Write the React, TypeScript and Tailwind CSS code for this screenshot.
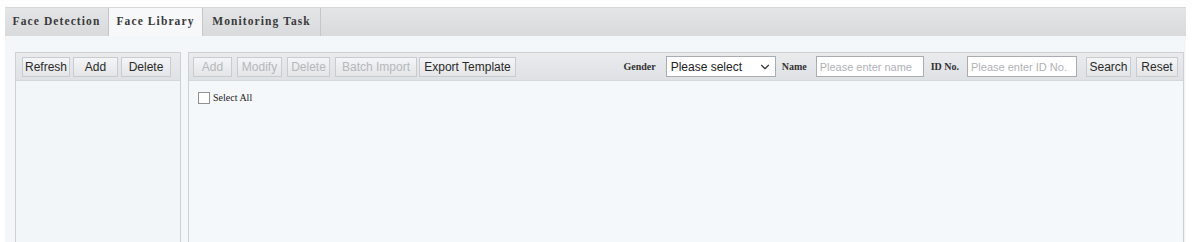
import React from 'react';
import { ChevronDown } from 'lucide-react';

const TABS = [
  { id: 'detection', label: 'Face Detection', w: 'w-[104px]' },
  { id: 'library', label: 'Face Library', w: 'w-[94px]' },
  { id: 'task', label: 'Monitoring Task', w: 'w-[118px]' },
];

const serif = { fontFamily: '"Liberation Serif", "Times New Roman", serif' };
const sans = { fontFamily: '"Liberation Sans", Arial, sans-serif' };

function ToolButton({ label, disabled, w }: { label: string; disabled?: boolean; w: string }) {
  return (
    <button
      style={sans}
      className={`${w} h-[20px] border border-[#c9cccf] bg-gradient-to-b from-[#f4f5f6] to-[#e3e5e7] text-[12px] leading-none flex items-center justify-center ${
        disabled ? 'text-[#b5b8bb]' : 'text-[#2a2a2a]'
      }`}
    >
      {label}
    </button>
  );
}

function Label({ text, className }: { text: string; className: string }) {
  return (
    <span style={serif} className={`${className} text-[10px] leading-none font-bold text-[#333] whitespace-nowrap`}>
      {text}
    </span>
  );
}

export default function App() {
  const activeTab = 'library';

  return (
    <div className="w-[1193px] h-[242px] bg-white overflow-hidden pt-[7px] pl-[5px]">
      {/* Tabs */}
      <div className="w-[1181px] h-[29px] flex border-t border-[#d6d8da] bg-gradient-to-b from-[#e4e5e6] to-[#d8dadb]">
        {TABS.map((tab) => (
          <div
            key={tab.id}
            style={serif}
            className={`${tab.w} h-full flex items-center justify-center text-[11.5px] font-bold tracking-[1.1px] text-[#3a3a3a] border-r border-[#c4c6c8] ${
              activeTab === tab.id ? 'bg-[#f6f8fa]' : ''
            }`}
          >
            {tab.label}
          </div>
        ))}
      </div>

      {/* Content */}
      <div className="w-[1181px] h-[210px] bg-[#f4f7fa] flex gap-[7px] pt-[16px] pl-[10px]">
        {/* Left panel */}
        <div className="w-[166px] h-[200px] flex flex-col border border-[#cdd1d5] bg-[#f3f6f9]">
          <div className="h-[28px] flex items-center gap-[3px] pl-[6px] bg-gradient-to-b from-[#e9ebed] to-[#dfe2e5] border-b border-[#d5d8db]">
            <ToolButton label="Refresh" w="w-[48px]" />
            <ToolButton label="Add" w="w-[45px]" />
            <ToolButton label="Delete" w="w-[50px]" />
          </div>
        </div>

        {/* Right panel */}
        <div className="w-[996px] h-[200px] flex flex-col border border-[#cdd1d5] bg-[#f5f8fb]">
          <div className="h-[28px] flex items-center pl-[4px] pr-[5px] bg-gradient-to-b from-[#e9ebed] to-[#dfe2e5] border-b border-[#d5d8db]">
            <div className="flex items-center gap-[5px]">
              <ToolButton label="Add" disabled w="w-[39px]" />
              <ToolButton label="Modify" disabled w="w-[45px]" />
              <ToolButton label="Delete" disabled w="w-[43px]" />
              <ToolButton label="Batch Import" disabled w="w-[82px]" />
            </div>
            <div className="ml-[2px]">
              <ToolButton label="Export Template" w="w-[97px]" />
            </div>

            <div className="ml-auto flex items-center">
              <Label text="Gender" className="" />
              <div
                style={sans}
                className="ml-[10px] w-[110px] h-[21px] bg-white border border-[#a9adb1] flex items-center justify-between pl-[4px] pr-[3px] text-[12px] text-[#222]"
              >
                <span>Please select</span>
                <ChevronDown size={14} strokeWidth={2} className="text-[#333]" />
              </div>
              <Label text="Name" className="ml-[6px]" />
              <input
                style={sans}
                placeholder="Please enter name"
                className="ml-[9px] w-[108px] h-[21px] bg-white border border-[#a9adb1] px-[3px] text-[11px] placeholder:text-[#b0b3b6] outline-none"
              />
              <Label text="ID No." className="ml-[7px]" />
              <input
                style={sans}
                placeholder="Please enter ID No."
                className="ml-[8px] w-[110px] h-[21px] bg-white border border-[#a9adb1] px-[3px] text-[11px] placeholder:text-[#b0b3b6] outline-none"
              />
              <div className="ml-[9px] flex items-center gap-[5px]">
                <ToolButton label="Search" w="w-[45px]" />
                <ToolButton label="Reset" w="w-[42px]" />
              </div>
            </div>
          </div>

          <div className="flex items-center gap-[3px] pl-[9px] pt-[9px]">
            <span className="w-[12px] h-[12px] border border-[#8f9397] bg-white" />
            <span style={serif} className="text-[10px] text-[#222]">
              Select All
            </span>
          </div>
        </div>
      </div>
    </div>
  );
}
